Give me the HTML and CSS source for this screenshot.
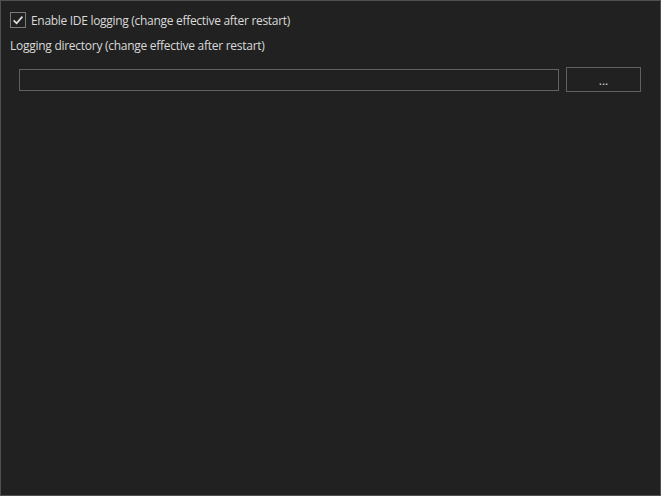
FILE: index.html
```html
<!DOCTYPE html>
<html lang="en">
<head>
    <meta charset="UTF-8">
    <meta name="viewport" content="width=device-width, initial-scale=1.0">
    <title>Logging Options</title>
    <link rel="stylesheet" href="styles.css">
</head>
<body>
    <div class="panel">
        <label class="check-row">
            <span class="check-box">
                <svg width="12" height="12" viewBox="0 0 12 12">
                    <path d="M1.6 6.4 L4.6 9.3 L10.4 2.6" fill="none" stroke="#e2e2e2" stroke-width="1.7"/>
                </svg>
            </span>
            <span class="check-label">Enable IDE logging (change effective after restart)</span>
        </label>

        <div class="field-label">Logging directory (change effective after restart)</div>

        <div class="dir-row">
            <input class="dir-input" type="text" value="">
            <button class="browse-btn">...</button>
        </div>
    </div>
</body>
</html>
```

FILE: styles.css
```css
* {
    box-sizing: border-box;
    margin: 0;
    padding: 0;
}

html, body {
    height: 100%;
}

body {
    background: #202020;
    color: #dadada;
    font-family: 'Open Sans', 'Noto Sans', sans-serif;
    font-size: 12px;
}

.panel {
    height: 100%;
    border: 1px solid #505050;
    background: #212121;
    padding: 11px 19px 0 9px;
}

.check-row {
    display: flex;
    align-items: center;
    gap: 5px;
    height: 16px;
}

.check-box {
    width: 16px;
    height: 16px;
    border: 1px solid #7a7a7a;
    display: flex;
    align-items: center;
    justify-content: center;
}

.check-label {
    line-height: 16px;
    margin-top: 2px;
    letter-spacing: -0.3px;
}

.field-label {
    margin-top: 9px;
    line-height: 17px;
    letter-spacing: -0.27px;
}

.dir-row {
    display: flex;
    align-items: center;
    gap: 7px;
    margin-top: 13px;
    padding-left: 9px;
}

.dir-input {
    flex: 1;
    height: 22px;
    background: #212121;
    border: 1px solid #606060;
    color: #dadada;
    outline: none;
}

.browse-btn {
    width: 75px;
    height: 25px;
    background: #212121;
    border: 1px solid #606060;
    color: #dadada;
    font-family: inherit;
    font-size: 12px;
    line-height: 26px;
}
```
